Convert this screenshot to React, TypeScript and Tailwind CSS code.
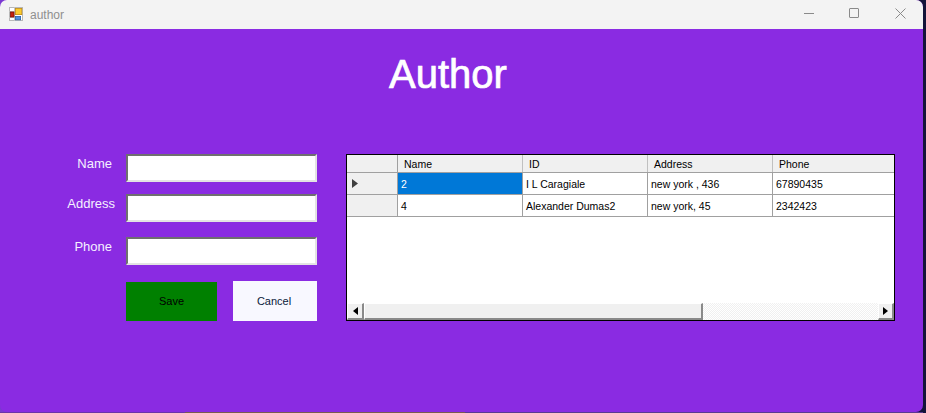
const font = { fontFamily: '"Liberation Sans", Arial, sans-serif' };

function AppIcon() {
  return (
    <svg width="14" height="14" viewBox="0 0 14 14" className="shrink-0">
      <rect x="0.5" y="0.5" width="13" height="13" fill="#ffffff" stroke="#b8b8b8" />
      <path d="M0 4.5 H6 M5.5 0 V14 M0 10.5 H6" stroke="#c4c4c4" strokeWidth="1" fill="none" />
      <rect x="1.5" y="5" width="3.5" height="5" fill="#c4200e" stroke="#7a1208" strokeWidth="0.8" />
      <rect x="6.4" y="1.4" width="6.4" height="6.2" fill="#fbcb2e" stroke="#c08a10" strokeWidth="0.8" />
      <rect x="6.4" y="9.4" width="5.2" height="3.4" fill="#4f90e0" stroke="#2a62a8" strokeWidth="0.8" />
    </svg>
  );
}

function Field({ label, labelClass, rowClass }: { label: string; labelClass: string; rowClass: string }) {
  return (
    <div className={`flex items-start ${rowClass}`}>
      <div className="w-[126px] h-[28px]">
        <span className={`block text-right text-[13px] leading-[18px] text-[#f5f0ff] ${labelClass}`}>{label}</span>
      </div>
      <div className="w-[191px] h-[28px] bg-white border-2 border-t-[#6f6f6f] border-l-[#6f6f6f] border-r-[#e3e3e3] border-b-[#e3e3e3]" />
    </div>
  );
}

const columns = ["Name", "ID", "Address", "Phone"];
const rows = [
  ["2", "I L Caragiale", "new york , 436", "67890435"],
  ["4", "Alexander Dumas2", "new york, 45", "2342423"],
];

const scrollBtn =
  "shrink-0 bg-[#f0f0f0] border border-r-2 border-b-2 border-t-white border-l-white border-r-[#8a8a8a] border-b-[#8a8a8a] flex items-center justify-center";

function Grid() {
  return (
    <div className="w-[549px] h-[167px] bg-white border border-black flex flex-col text-[10.5px] text-black overflow-hidden">
      <div className="flex h-[18px] shrink-0 bg-[#f0f0f0] border-b border-[#a0a0a0]">
        <div className="w-[51px] shrink-0 border-r border-[#a0a0a0]" />
        {columns.map((c) => (
          <div key={c} className="w-[125px] shrink-0 h-[17px] flex items-center pl-[6px] pt-[2px] leading-none border-r border-[#c0c0c0] last:border-r-0">
            {c}
          </div>
        ))}
      </div>
      {rows.map((r, i) => (
        <div key={r[0]} className="flex h-[22px] shrink-0 border-b border-[#a0a0a0]">
          <div className="w-[51px] shrink-0 bg-[#f0f0f0] border-r border-[#a0a0a0] flex items-center pl-[5px]">
            {i === 0 && (
              <svg width="6" height="9" viewBox="0 0 6 9">
                <path d="M0 0 L6 4.5 L0 9 Z" fill="#404040" />
              </svg>
            )}
          </div>
          {r.map((v, j) => (
            <div
              key={j}
              className={`w-[125px] shrink-0 flex items-center pl-[3px] pt-[2px] border-r border-[#a0a0a0] last:border-r-0 ${
                i === 0 && j === 0 ? "bg-[#0078d7] text-white" : ""
              }`}
            >
              {v}
            </div>
          ))}
        </div>
      ))}
      <div className="flex-1" />
      <div className="h-[17px] shrink-0 flex bg-[repeating-conic-gradient(#f0f0f0_0_25%,#ffffff_0_50%)] bg-[length:2px_2px]">
        <div className={`w-[17px] ${scrollBtn}`}>
          <svg width="5" height="8" viewBox="0 0 5 8"><path d="M5 0 L0 4 L5 8 Z" fill="#000" /></svg>
        </div>
        <div className="w-[339px] shrink-0 bg-[#f0f0f0] border border-r-2 border-b-2 border-t-white border-l-white border-r-[#8a8a8a] border-b-[#8a8a8a]" />
        <div className="flex-1" />
        <div className={`w-[16px] ${scrollBtn}`}>
          <svg width="5" height="8" viewBox="0 0 5 8"><path d="M0 0 L5 4 L0 8 Z" fill="#000" /></svg>
        </div>
      </div>
    </div>
  );
}

export default function App() {
  return (
    <div style={font} className="w-[926px] h-[413px] overflow-hidden flex flex-col bg-[#14143a]">
      <div className="h-[412px] flex shrink-0 bg-[linear-gradient(90deg,#7a3ad0_50%,#14143a_50%)]">
        <div className="w-[923px] h-[412px] rounded-[7px] overflow-hidden flex flex-col bg-[#8a2be2]">
          <div className="h-[29px] shrink-0 bg-[#f3f3f3] flex items-center">
            <div className="ml-[9px] mb-px"><AppIcon /></div>
            <span className="ml-[7px] text-[12px] text-[#8f8f8f]">author</span>
            <div className="ml-auto flex items-center pr-[17px] pb-[3px]">
              <div className="w-[10px] h-px bg-[#8a8a8a]" />
              <div className="ml-[35px] w-[10px] h-[10px] border border-[#8a8a8a] rounded-[1px]" />
              <svg className="ml-[36px]" width="11" height="11" viewBox="0 0 11 11"><path d="M0.5 0.5 L10.5 10.5 M10.5 0.5 L0.5 10.5" stroke="#8a8a8a" strokeWidth="1" fill="none" /></svg>
            </div>
          </div>

          <h1 className="mt-[22px] h-[47px] pr-[27px] text-center text-[40px] leading-[47px] font-normal text-white [-webkit-text-stroke:0.7px_white]">
            Author
          </h1>

          <div className="mt-[56px] flex items-start">
            <div className="w-[346px] shrink-0 flex flex-col">
              <Field label="Name" labelClass="pr-[14px] pt-px" rowClass="" />
              <Field label="Address" labelClass="pr-[11px] pt-px" rowClass="mt-[12px]" />
              <Field label="Phone" labelClass="pr-[14px] pt-px" rowClass="mt-[15px]" />
              <div className="mt-[16px] ml-[126px] flex items-start text-[11px]">
                <button className="mt-px w-[91px] h-[39px] bg-[#008000] text-black">Save</button>
                <button className="ml-[16px] w-[84px] h-[40px] pt-px pr-[2px] bg-[#f8f8ff] text-[#0a1a3a]">Cancel</button>
              </div>
            </div>
            <Grid />
          </div>
        </div>
      </div>
      <div className="h-px flex shrink-0">
        <div className="w-[185px] bg-[#6a35a8]" />
        <div className="w-[280px] bg-[#7a5a50]" />
        <div className="w-[458px] bg-[#5a3a90]" />
      </div>
    </div>
  );
}
